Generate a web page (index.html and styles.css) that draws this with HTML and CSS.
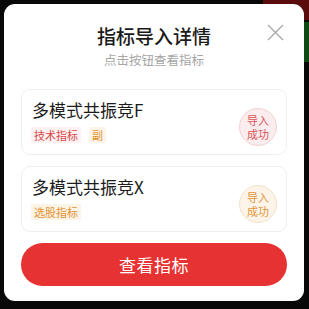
FILE: index.html
```html
<!DOCTYPE html>
<html lang="zh">
<head>
<meta charset="utf-8">
<link rel="stylesheet" href="styles.css">
</head>
<body>
<div class="backdrop">
  <div class="bg-red"></div>
  <div class="bg-green"></div>
  <div class="modal">
    <button class="close" aria-label="关闭">
      <svg width="17" height="17" viewBox="0 0 17 17"><path d="M1 1L16 16M16 1L1 16" stroke="#a8a8a8" stroke-width="1.4" fill="none"/></svg>
    </button>
    <div class="header">
      <div class="title">指标导入详情</div>
      <div class="subtitle">点击按钮查看指标</div>
    </div>
    <div class="list">
      <div class="card">
        <div class="info">
          <div class="name">多模式共振竞F</div>
          <div class="tags">
            <span class="tag tag-red">技术指标</span>
            <span class="tag tag-orange">副</span>
          </div>
        </div>
        <div class="badge badge-red">导入<br>成功</div>
      </div>
      <div class="card">
        <div class="info">
          <div class="name">多模式共振竞X</div>
          <div class="tags">
            <span class="tag tag-orange">选股指标</span>
          </div>
        </div>
        <div class="badge badge-orange">导入<br>成功</div>
      </div>
    </div>
    <button class="primary">查看指标</button>
  </div>
</div>
</body>
</html>
```
FILE: styles.css
```css
html, body {
  margin: 0;
  padding: 0;
  background: #080808;
  font-family: "Noto Sans CJK SC", "Noto Sans", sans-serif;
}
.backdrop {
  position: relative;
  width: 309px;
  height: 309px;
  padding: 4px 5px 0 4px;
  box-sizing: border-box;
  overflow: hidden;
}
.bg-red {
  position: absolute;
  right: 0;
  top: 0;
  width: 46px;
  height: 20px;
  background: #5a0b0b;
}
.bg-green {
  position: absolute;
  right: 0;
  top: 22px;
  width: 10px;
  height: 40px;
  background: #0d4a14;
}
.modal {
  position: relative;
  width: 300px;
  height: 297px;
  background: #ffffff;
  border-radius: 11px;
  box-sizing: border-box;
  padding: 21px 17px 15px 17px;
  display: flex;
  flex-direction: column;
}
.close {
  position: absolute;
  left: 263px;
  top: 20px;
  width: 17px;
  height: 17px;
  padding: 0;
  border: 0;
  background: none;
  display: flex;
}
.header {
  display: flex;
  flex-direction: column;
  align-items: center;
  gap: 5px;
}
.title {
  font-size: 19px;
  line-height: 22px;
  font-weight: 500;
  color: #1a1a1a;
}
.subtitle {
  font-size: 12.5px;
  line-height: 16px;
  color: #a5a5a5;
}
.list {
  margin-top: 21px;
  display: flex;
  flex-direction: column;
  gap: 11px;
}
.card {
  height: 66px;
  box-sizing: border-box;
  border: 1px solid #efefef;
  border-radius: 9px;
  padding: 10px 9px 0 10px;
  display: flex;
  justify-content: space-between;
  align-items: flex-start;
}
.info {
  display: flex;
  flex-direction: column;
  gap: 7px;
}
.name {
  font-size: 17px;
  line-height: 20px;
  color: #1c1c1c;
}
.tags {
  display: flex;
  gap: 8px;
  margin-left: -1px;
}
.tag {
  font-size: 11px;
  line-height: 16px;
  padding: 0 3px;
  border-radius: 2px;
}
.tag-red {
  color: #d84848;
  background: #fdf1f1;
}
.tag-orange {
  color: #e29230;
  background: #fdf4e8;
}
.badge {
  width: 38px;
  height: 38px;
  margin-top: 8px;
  box-sizing: border-box;
  border-radius: 50%;
  font-size: 11px;
  line-height: 14px;
  display: flex;
  align-items: center;
  justify-content: center;
  text-align: center;
}
.badge-red {
  color: #d9545a;
  background: #fbeced;
  border: 1px solid #f1d3d4;
}
.badge-orange {
  color: #e3963a;
  background: #fcf4e8;
  border: 1px solid #f3e2c8;
}
.primary {
  margin-top: 11px;
  height: 43px;
  border: 0;
  border-radius: 22px;
  background: #e63232;
  color: #ffffff;
  font-family: inherit;
  font-size: 17px;
  letter-spacing: 0.5px;
  padding: 0;
}
```
